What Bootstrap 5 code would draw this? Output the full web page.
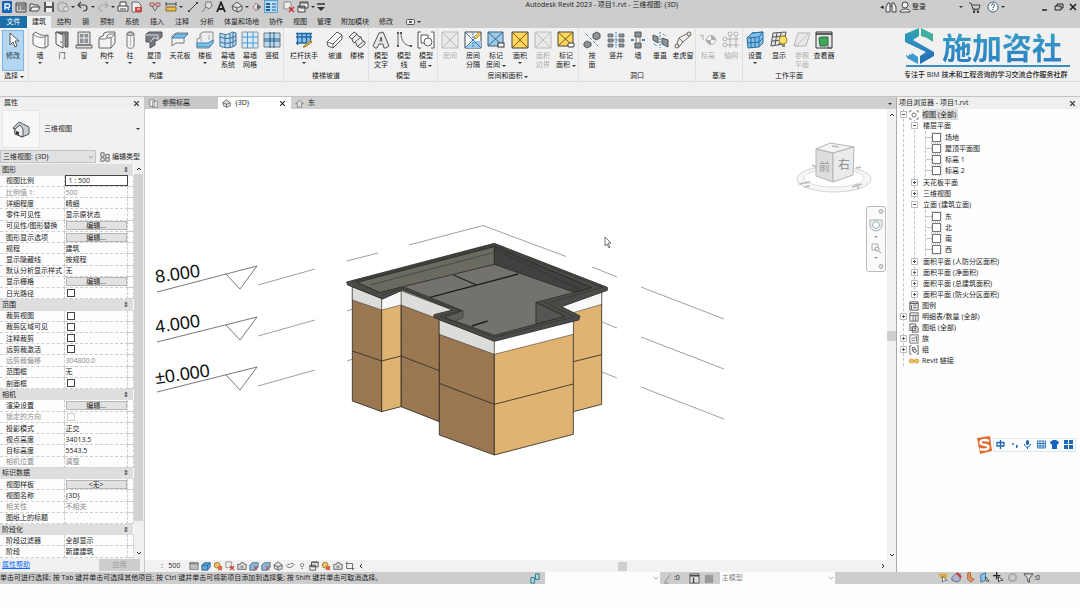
<!DOCTYPE html>
<html lang="zh-CN">
<head>
<meta charset="utf-8">
<meta name="viewport" content="width=device-width, initial-scale=1">
<title>Autodesk Revit 2023 - 项目1.rvt</title>
<link href="https://cdn.jsdelivr.net/npm/bootstrap@5.3.0/dist/css/bootstrap.min.css" rel="stylesheet">
<script src="https://cdn.jsdelivr.net/npm/bootstrap@5.3.0/dist/js/bootstrap.bundle.min.js"></script>
<style>
body{font-family:"Open Sans","Noto Sans CJK SC",sans-serif;font-size:7px;line-height:10px;color:#222;background:#fefefe}
button,input,select{font:inherit;color:inherit;padding:0;margin:0;border:0;background:none;border-radius:0}
button{white-space:nowrap}
svg{display:block;flex:none}
ul{list-style:none;margin:0;padding:0}
.chrome{background:#cdcdcd}
.titlerow{height:16px;padding-bottom:2px}
.qb{width:14px;height:13px;display:flex;align-items:center;justify-content:center;flex:none}
.qb svg{width:12px;height:12px}
.qc{width:6px}
.g2{margin-left:2px}
.on{background:#b5daf3;outline:1px solid #5b9fcb;outline-offset:-1px}
.caret{width:0;height:0;border:2px solid transparent;border-top-color:#333;border-bottom:0;display:inline-block}
.tabrow{height:12px}
.rtab{padding:0 5px 0 6px;line-height:12px}
.rtab.snug{padding:0 5px}
.rtab.file{width:27px;background:#1b6fa9;color:#fff;padding:0}
.rtab.now{background:#f2f2f2;width:24px;padding:0}
.ribbon{height:54px;background:#f1f1f1;border-bottom:1px solid #dcdcdc}
.rgroup{border-left:1px solid #e0e0e0;padding-top:2px}
.rgroup.first{border:0;width:28px}
.gname{line-height:10px;text-align:center}
.tool{width:22px;height:41px;padding-top:1px;line-height:9px;display:flex;flex-direction:column;align-items:center}
.tool svg{width:18px;height:18px;margin-bottom:2px}
.tool .caret{margin-top:2px}
.tool small{font-size:7px;white-space:nowrap}
.t24{width:24px}.t26{width:26px}.t40{width:40px}
.dim{opacity:.35}
.tool.pick{background:#b3d6f2;outline:1px solid #7fb3dc;outline-offset:-1px;color:#234}
.optbar{height:15px;background:#f0f0f0;border-bottom:1px solid #c4c4c4}
.brand{width:176px;color:#2e8fc3}
.brandname{font-size:30px;line-height:36px;font-weight:700;font-family:"Noto Sans CJK SC",sans-serif;background:linear-gradient(#3aa2c4,#2a7fc4);-webkit-background-clip:text;background-clip:text;color:transparent}
.brandrule{height:2px;width:164px;background:#3d8fbf;margin-top:1px}
.tagline{color:#222;font-weight:500;font-family:"Open Sans","Noto Sans CJK SC",sans-serif;white-space:nowrap;line-height:12px;margin-top:2px}
.side{width:145px;background:#f1f1f1;border-right:1px solid #c9c9c9}
.panehead{height:12px;line-height:12px;background:#efefef}
.typebox{height:40px}
.thumb{width:38px;height:38px;background:#f8f8f8;border:1px solid #e6e6e6}
.typecombo{height:15px}
.pick3d{appearance:none;width:96px;height:13px;background-color:#e1e1e1;border:1px solid #c2c2c2;padding-left:2px}
.chev{background-image:url("data:image/svg+xml,%3Csvg xmlns='http://www.w3.org/2000/svg' viewBox='0 0 8 8'%3E%3Cpath d='M1 2.5l3 3 3-3' fill='none' stroke='%23888'/%3E%3C/svg%3E");background-repeat:no-repeat;background-size:6px 6px;background-position:right 1px center}
.props{width:133px;height:100%;border-collapse:collapse;table-layout:fixed;background:#fdfdfd}
.props td,.props th{padding:0 0 0 1px;border-bottom:1px dashed #cfcfcf;border-right:1px dashed #cfcfcf;font-weight:400;height:11px;line-height:9px;white-space:nowrap;overflow:visible}
.props th.nm{padding-left:6px}
.props th.cat{background:#dedede;border-right:0;border-bottom:1px solid #dedede;padding-left:2px}
.props .off{color:#8b8b8b}
.props .edit{display:block;width:61px;height:9px;line-height:7px;background:#e2e2e2;border:1px solid #b5b5b5;text-align:center}
.props .box{display:block;appearance:none;width:8px;height:8px;border:1px solid #444;background:#fff;margin-left:1px}
.props .off .box{border-color:#ccc}
.props .scale{display:block;width:61px;height:9px;outline:1px solid #444;outline-offset:0;padding-left:3px;background:#fff}
.vbar{width:10px;background:#f0f0f0}
.vbar .knob{flex:0 0 88%;background:#d2d2d2;width:9px}
.foot{height:14px}
.apply{width:41px;height:12px;background:#cdcdcd;color:#999}
.vtabs{height:12px;background:#d0d0d0}
.vtab{height:12px;display:flex;align-items:center;padding:0 5px 0 4px}
.vtab svg{width:9px;height:9px}
.vtab .closer svg{width:7px;height:7px}
.vtab.past{width:73px;background:#c8c8c8}
.vtab.open{width:73px;background:#fff}
.canvas{background:#fff}
.vscroll{width:9px;background:#f1f1f1}
.vscroll .knob{height:10px;background:#cfcfcf;margin-bottom:209px}
.viewctl{height:12px;background:#f2f2f2}
.viewctl svg{width:10px;height:10px}
.viewctl button{width:12px;display:flex;justify-content:center}
.hthumb{width:9px;height:9px;background:#cfcfcf}
.navbox{right:1px;top:97px;width:20px;height:66px;border:1px solid #bbb;border-radius:3px;background:#fafafa}
.browser{width:184px;background:#fefefe;border-left:1px solid #aaa}
.browser .panehead{padding-left:2px}
.tree,.tree ul{border-left:1px dashed #c4c4c4}
.tree{margin:0 0 0 6px;line-height:11px}
.tree ul{margin-left:10px}
.tree ul ul{padding:1px 0}
.row1{display:flex;align-items:center;height:11px}
.tg{width:7px;height:7px;margin-left:-4px;background:#fff;display:flex;align-items:center;justify-content:center}
.tg svg{width:7px;height:7px}
.row1 .ic{width:10px;height:10px;margin:0 3px 0 2px}
.row1 .ind{margin-left:5px}
.noexp{margin-left:3px}
.dash{width:6px;border-top:1px dashed #c4c4c4}
.leaf{width:9px;height:9px;border:1px solid #777;outline:1px dotted #ccc;margin-right:4px;background:#fff}
.chosen{background:#dcdcdc;padding-right:2px}
.ime{right:4px;top:338px;height:19px}
.imebar{height:14px;background:#fafcfe;border:1px solid #dfe6ec;width:83px}
.imebar svg{width:9px;height:9px}
.statusbar{height:12px;background:#cdcdcd;line-height:12px}
.statusbar svg{width:11px;height:11px}
.hint{width:530px;white-space:nowrap}
.stsel{appearance:none;width:115px;height:12px;background-color:#fdfdfd;color:#888;padding-left:2px}
.stic{width:14px;display:flex;justify-content:center}
</style>
</head>
<body class="vh-100 d-flex flex-column pb-4 overflow-hidden">

<svg width="0" height="0" class="position-absolute" aria-hidden="true">
<defs>
<!-- 18px ribbon glyphs -->
<symbol id="i-cursor" viewBox="0 0 18 18"><path d="M6 2v12l3-3 2 5 2-1-2-5h4z" fill="#fff" stroke="#555"/></symbol>
<symbol id="i-wall" viewBox="0 0 18 18"><path d="M2 3l3-2c3 3 7 4 12 3v11l-3 2C9 17 5 16 2 13z" fill="#fafafa" stroke="#666"/><path d="M2 3c3 3 7 4 12 3l3-2M14 6v11" fill="none" stroke="#777"/></symbol>
<symbol id="i-door" viewBox="0 0 18 18"><path d="M3 1h12v15h-3V3H3z" fill="#888" stroke="#555"/><path d="M3 1l7 3v13l-7-4z" fill="#f4f4f4" stroke="#555"/><path d="M8 10v2" stroke="#555"/></symbol>
<symbol id="i-win" viewBox="0 0 18 18"><path d="M3 1h12v13H3zM1 14h16v3H1z" fill="#ddd" stroke="#666"/><path d="M5 3h8v9H5z" fill="#8b9097"/><path d="M9 3v9M5 7h8" stroke="#eee"/></symbol>
<symbol id="i-comp" viewBox="0 0 18 18"><path d="M1 8l1-2 3-1 1-3 3-1h8v11l-4 5H1z" fill="#f4f4f4" stroke="#666"/><path d="M1 8h6l2-1V5l2-2h6M13 17V7l4-4M9 7h4" fill="none" stroke="#777"/></symbol>
<symbol id="i-col" viewBox="0 0 18 18"><path d="M6 3c0-3 7-3 7 0v12c0 3-7 3-7 0z" fill="#f4f4f4" stroke="#777"/><ellipse cx="9.500" cy="3" rx="3.500" ry="1.500" fill="#ccc" stroke="#777"/><path d="M9.500 5v10" stroke="#bbb"/></symbol>
<symbol id="i-roof" viewBox="0 0 18 18"><path d="M1 3l3-2h13v5l-4 3-3 1v4l-5 3v-6H1z" fill="#747b82" stroke="#555"/><path d="M1 4h12v5M5 11l3-3V7h5" stroke="#ddd" fill="none"/></symbol>
<symbol id="i-ceil" viewBox="0 0 18 18"><path d="M1 5l4-3h12l-4 4v6H5l-4 3z" fill="#f4f4f4" stroke="#777"/><path d="M1 7l4-4h12l-4 4z" fill="#7cc0e8" stroke="#3b86b5"/></symbol>
<symbol id="i-floor" viewBox="0 0 18 18"><path d="M4 3l3-2h10v11l-4 5H1V8l3-1z" fill="#eee" stroke="#888"/><path d="M1 12h11l5-3v3l-4 4H1z" fill="#7cc0e8" stroke="#3b86b5"/><path d="M5 4v7M13 4v5" stroke="#aaa"/></symbol>
<symbol id="i-cwsys" viewBox="0 0 18 18"><path d="M1 2c5 2 8 2 12-1l4 1v12c-5 4-12 3-16 1z" fill="#b9def4" stroke="#3d6f96"/><path d="M1 6c5 2 11 2 16-1M1 11c5 2 11 2 16-2M6 3v13M11 3v14M14 2v14" fill="none" stroke="#3d6f96"/></symbol>
<symbol id="i-cwg" viewBox="0 0 18 18"><path d="M1 1h16v16H1z" fill="#dcecf6" stroke="#8a9299"/><path d="M6.500 1v16M12 1v16M1 6h16M1 12h16" stroke="#4d9bd0" fill="none"/></symbol>
<symbol id="i-mull" viewBox="0 0 18 18"><path d="M1 2h16v14H1z" fill="#b5dcf3" stroke="#777"/><path d="M1 8h16M7 1v16M11 1v16M1 10h16" stroke="#345b78" fill="none"/></symbol>
<symbol id="i-rail" viewBox="0 0 18 18"><path d="M2 2h14v10H2z" fill="#8ec3ea"/><path d="M1 2.500h16M1 6h16M2.500 2v12M7 2v10M11.500 2v10M15.500 2v9M1 12h11" stroke="#2468a6" stroke-width="1.400"/><path d="M8 16l7-6 2 1-7 5z" fill="#f2ca4d" stroke="#967422"/></symbol>
<symbol id="i-ramp" viewBox="0 0 18 18"><path d="M1 11L11 1l5 3v4L7 17l-5-2z" fill="#fafafa" stroke="#555"/><path d="M1 11l6 2L16 4M7 13v4" fill="none" stroke="#666"/></symbol>
<symbol id="i-stair" viewBox="0 0 18 18"><path d="M1 6l5-5 3 2 1 2 3 1 1 3 3 2v2l-5 4-3-2-1-3-3-1-1-3z" fill="#eee" stroke="#555"/><path d="M4 8l5-5M7 11l6-5M10 15l6-5" stroke="#555"/></symbol>
<symbol id="i-mtext" viewBox="0 0 18 18"><path d="M1 15L7 2l4-1 6 14-3 2h-2l-1-4H7l-2 4H3zM8 10h2L9 6z" fill="#e8e8e8" stroke="#555" fill-rule="evenodd"/></symbol>
<symbol id="i-mline" viewBox="0 0 18 18"><path d="M3 2v13M6 2c0 8 4 13 11 13" fill="none" stroke="#666"/><path d="M2 1h2v2H2zM2 14h2v2H2zM5 1h2v2H5zM15 14h2v2h-2z" fill="#555"/></symbol>
<symbol id="i-mgrp" viewBox="0 0 18 18"><path d="M4 1H1v16h3M14 1h3v16h-3M4 4h7v8H4z" fill="#fff" stroke="#555"/><circle cx="11" cy="11" r="4" fill="#f4f4f4" stroke="#666"/></symbol>
<symbol id="i-room" viewBox="0 0 18 18"><path d="M1 1h16v16H1z" fill="#ddd" stroke="#555"/><path d="M1 1l16 16M17 1L1 17" stroke="#555"/></symbol>
<symbol id="i-rsep" viewBox="0 0 18 18"><path d="M1 1h16v16H1z" fill="#f4f8fb" stroke="#444"/><path d="M10 10h7v7H1z" fill="#9ccbec"/><path d="M1 17L17 1M1 1l16 16" stroke="#376f9e"/><path d="M9 2v15" stroke="#2677b8" stroke-dasharray="2 1"/><path d="M10 6l5-5 2 2-5 5z" fill="#f4cf50" stroke="#8c6d20" stroke-width=".6"/></symbol>
<symbol id="i-rtag" viewBox="0 0 18 18"><path d="M1 1h15v14H1z" fill="#9ccbec" stroke="#3f5f7a"/><path d="M1 1l15 14M16 1L1 15" stroke="#3f5f7a"/><rect x="11" y="12" width="6" height="4" fill="#fff" stroke="#333"/></symbol>
<symbol id="i-area" viewBox="0 0 18 18"><path d="M1 1h16v16H1z" fill="#ffd75c" stroke="#4b4430"/><path d="M1 1l16 16M17 1L1 17" stroke="#6b5a26"/></symbol>
<symbol id="i-atag" viewBox="0 0 18 18"><path d="M1 1h15v14H1z" fill="#ffd75c" stroke="#4b4430"/><path d="M1 1l15 14M16 1L1 15" stroke="#6b5a26"/><rect x="11" y="12" width="6" height="4" rx="1" fill="#fff" stroke="#333"/></symbol>
<symbol id="i-face" viewBox="0 0 18 18"><path d="M3 3l12 12" stroke="#3b86b5" stroke-dasharray="3 2"/><path d="M10 3l4-2 3 2v4l-4 2-3-2zM1 12l3-2 4 2v3l-4 2-3-2z" fill="#8c949b" stroke="#555"/></symbol>
<symbol id="i-shaft" viewBox="0 0 18 18"><path d="M1 3h5v3H1zM12 3h5v3h-5zM1 8h5v3H1zM12 8h5v3h-5zM1 13h5v3H1zM12 13h5v3h-5z" fill="#8c949b" stroke="#555" stroke-width=".7"/><path d="M9 1v16M6 9h6" stroke="#3b86c5" stroke-dasharray="2 1"/></symbol>
<symbol id="i-wopen" viewBox="0 0 18 18"><path d="M6 1h6v5H6zM6 12h6v5H6z" fill="#8c949b" stroke="#555"/><path d="M2 9h3M13 9h3" stroke="#3b86c5" stroke-width="2"/><path d="M7 7v4M11 7v4" stroke="#777"/></symbol>
<symbol id="i-vert" viewBox="0 0 18 18"><path d="M2 4l5 2v6l-5-3zM11 7l6 2v7l-6-3z" fill="#8c949b" stroke="#555"/><path d="M9 1v16M3 13l3 2M12 3l3 2" stroke="#3b86c5" stroke-dasharray="2 1"/></symbol>
<symbol id="i-dorm" viewBox="0 0 18 18"><path d="M2 16l3-9 9-5 2 3-7 6-4 5zM5 7l4 4" fill="#eee" stroke="#75685c"/><circle cx="15" cy="3" r="2" fill="#ddd" stroke="#75685c"/><circle cx="3" cy="15" r="2" fill="#ddd" stroke="#75685c"/></symbol>
<symbol id="i-level" viewBox="0 0 18 18"><path d="M1 5l3-1v5M6 9h5" stroke="#333" fill="none"/><circle cx="12" cy="9" r="4.500" fill="#fff" stroke="#333"/><path d="M12 9V4.500A4.500 4.500 0 0116.500 9zM12 9v4.500A4.500 4.500 0 017.500 9z" fill="#333"/></symbol>
<symbol id="i-grid" viewBox="0 0 18 18"><path d="M8 5v12M14 5v12M5 8h12M5 14h12" stroke="#333"/><g fill="#fff" stroke="#333"><circle cx="8" cy="3" r="2"/><circle cx="14" cy="3" r="2"/><circle cx="3" cy="8" r="2"/><circle cx="3" cy="14" r="2"/></g></symbol>
<symbol id="i-wpset" viewBox="0 0 18 18"><path d="M1 7l5-5 11-1v11l-4 4-11 1z" fill="#7fbfea" stroke="#2f6e9f"/><path d="M1 7l12-1 4-5M13 6v10M1 12l12-1 4-4M5 6v11M9 6v10M6 2l11-1" fill="none" stroke="#2f6e9f"/></symbol>
<symbol id="i-wpshow" viewBox="0 0 18 18"><path d="M3 2l13-1-2 12-13 2z" fill="#e4e6e8" stroke="#555"/><path d="M7 2L5 14M11 2L9 14M2 6l13-1M2 10l12-1" stroke="#555"/><circle cx="13" cy="9" r="4" fill="#ffe169" stroke="#a88824"/><path d="M12 13h3v3h-3z" fill="#888"/></symbol>
<symbol id="i-refpl" viewBox="0 0 18 18"><path d="M5 2h12l-4 13H1z" fill="#ddd" stroke="#444"/><path d="M3 15L15 3" stroke="#333" stroke-dasharray="2 1"/></symbol>
<symbol id="i-viewer" viewBox="0 0 18 18"><path d="M1 1h16v16H1z" fill="#e8e8e8" stroke="#333"/><path d="M1 3h16" stroke="#333" stroke-width="1.500"/><path d="M4 7l2-1h7v7l-2 2H5z" fill="#46a35a" stroke="#23723a"/><path d="M13 13v4h4" fill="none" stroke="#555"/></symbol>
<!-- 12px glyphs -->
<symbol id="q-r" viewBox="0 0 12 12"><rect x="1" width="10" height="12" rx="1" fill="#1763b6"/><path d="M4 9V3h3a1.500 1.500 0 010 3.500H4M6.500 6.500L8 9" stroke="#fff" stroke-width="1.300" fill="none"/></symbol>
<symbol id="q-home" viewBox="0 0 12 12"><path d="M1 2h10v9H1zM1 4h10M3 6h2M3 8h2M6 6h4M6 8h4" fill="none" stroke="#444"/></symbol>
<symbol id="q-open" viewBox="0 0 12 12"><path d="M1 10V3h3l1 1h4v2M1 10l2-4h8l-2 4z" fill="#eee" stroke="#444"/></symbol>
<symbol id="q-save" viewBox="0 0 12 12"><path d="M1 1h9l1 1v9H1z" fill="#555"/><path d="M3 1h6v4H3zM3 7h6v4H3z" fill="#eee"/></symbol>
<symbol id="q-sync" viewBox="0 0 12 12"><path d="M1 3l4-2 5 2v6l-4 2-5-2z" fill="#ccc" stroke="#999"/><circle cx="9" cy="8" r="2.500" fill="#ddd" stroke="#999"/></symbol>
<symbol id="q-undo" viewBox="0 0 12 12"><path d="M4 1L1 4l3 3M1 4h6a3 3 0 010 6H6" fill="none" stroke="#444" stroke-width="1.200"/></symbol>
<symbol id="q-redo" viewBox="0 0 12 12"><path d="M8 1l3 3-3 3M11 4H5a3 3 0 000 6h1" fill="none" stroke="#aaa" stroke-width="1.200"/></symbol>
<symbol id="q-print" viewBox="0 0 12 12"><path d="M3 5V1h6v4M1 5h10v5H1zM3 8h6" fill="#f4f4f4" stroke="#444"/></symbol>
<symbol id="q-pdf" viewBox="0 0 12 12"><path d="M1 1h6l3 3v7H1z" fill="#eee" stroke="#666"/><path d="M4 6h7v5H4z" fill="#cc4a3d"/><path d="M6 8h3" stroke="#fff"/></symbol>
<symbol id="q-dim" viewBox="0 0 12 12"><path d="M1 2h4v3H1zM7 2h4v3H7z" fill="none" stroke="#a55"/><path d="M3 5l3 5 3-5" stroke="#666" fill="none"/></symbol>
<symbol id="q-meas" viewBox="0 0 12 12"><path d="M1 6h10v4H1z" fill="#e9bd4f" stroke="#8a6a22"/><path d="M1 3h10M1 1v4M11 1v4" stroke="#444"/></symbol>
<symbol id="q-line" viewBox="0 0 12 12"><path d="M2 10l8-8" stroke="#444"/><path d="M1 9h2v2H1zM9 1h2v2H9z" fill="#444"/></symbol>
<symbol id="q-tag" viewBox="0 0 12 12"><path d="M1 11l4-5M5 1h5l1 4-3 3-4-3z" fill="#ddd" stroke="#777"/></symbol>
<symbol id="q-a" viewBox="0 0 12 12"><path d="M2 11L6 1.500 10 11M3.500 8h5" fill="none" stroke="#222" stroke-width="1.800"/></symbol>
<symbol id="q-3d" viewBox="0 0 12 12"><path d="M1 5l5-4 5 4v4l-4 2-5-2z" fill="#ddd" stroke="#555"/><path d="M1 5l5 2 5-2M6 7v4" stroke="#555" fill="none"/></symbol>
<symbol id="q-sec" viewBox="0 0 12 12"><path d="M5 2l5 4-5 4-3-4z" fill="#ddd" stroke="#a77"/><path d="M6 3l4 3-4 3z" fill="#666"/></symbol>
<symbol id="q-thin" viewBox="0 0 12 12"><path d="M1 3h4M1 6h4M1 9h4" stroke="#1d5f96" stroke-width="2"/><path d="M7 3h4M7 6h4M7 9h4" stroke="#1d5f96"/></symbol>
<symbol id="q-close" viewBox="0 0 12 12"><path d="M1 1h7v7H1z" fill="#eee" stroke="#888"/><path d="M6 6l5 5M11 6l-5 5" stroke="#c33" stroke-width="1.400"/></symbol>
<symbol id="q-sw" viewBox="0 0 12 12"><path d="M3 1h8v6H3zM1 5h7v6H1z" fill="#eee" stroke="#444"/><path d="M1 6h7M3 2h8" stroke="#444"/></symbol>
<symbol id="q-bin" viewBox="0 0 12 12"><path d="M1 11V6l2-4h2v9zM7 11V2h2l2 4v5zM5 5h2" fill="#eee" stroke="#444"/></symbol>
<symbol id="q-user" viewBox="0 0 12 12"><circle cx="6" cy="4" r="3" fill="#f4f4f4" stroke="#444"/><path d="M1 11c0-4 10-4 10 0z" fill="#f4f4f4" stroke="#444"/></symbol>
<symbol id="q-cart" viewBox="0 0 12 12"><path d="M0 2h2l2 6h6l1-4H3M4 8v1h6" fill="none" stroke="#444"/><circle cx="5" cy="11" r="1"/><circle cx="9" cy="11" r="1"/></symbol>
<symbol id="q-x" viewBox="0 0 12 12"><path d="M2 2l8 8M10 2l-8 8" stroke="#222" stroke-width="1.800"/></symbol>
<symbol id="q-plus" viewBox="0 0 7 7"><path d="M.5.5h6v6h-6z" fill="#fff" stroke="#bbb"/><path d="M2 3.500h3M3.500 2v3" stroke="#555"/></symbol>
<symbol id="q-minus" viewBox="0 0 7 7"><path d="M.5.5h6v6h-6z" fill="#fff" stroke="#bbb"/><path d="M2 3.500h3" stroke="#555"/></symbol>
<symbol id="q-sheet" viewBox="0 0 12 12"><path d="M1 1h10v10H1zM1 4h10M5 4v7M8 4v7" fill="#f4f4f4" stroke="#555"/></symbol>
<symbol id="q-detail" viewBox="0 0 12 12"><path d="M1 2h10v8H1z" fill="#cfd3d1" stroke="#666"/><path d="M1 3.500h10" stroke="#555"/><path d="M2 6h8M2 8h8" stroke="#aaa"/></symbol>
<symbol id="q-cube" viewBox="0 0 12 12"><path d="M1 5l3-3h7v5l-3 4H1z" fill="#5fa4d6" stroke="#2c6596"/><path d="M1 5h7l3-3M8 5v6" fill="none" stroke="#2c6596"/></symbol>
<symbol id="q-cropr" viewBox="0 0 12 12"><path d="M1 5l3-3h7v5l-3 4H1z" fill="#8fb5d6" stroke="#4a6a86"/><path d="M6 6l4 5M10 6l-4 5" stroke="#b54a3c" stroke-width="1.200"/></symbol>
<symbol id="q-crop" viewBox="0 0 12 12"><path d="M2 1v8h9M1 3h8v8" fill="none" stroke="#555"/></symbol>
<symbol id="q-cam" viewBox="0 0 12 12"><path d="M1 4h3l1-2h3l1 2h2v6H1z" fill="#ddd" stroke="#555"/><circle cx="6" cy="7" r="2" fill="#999"/></symbol>
<symbol id="q-sun" viewBox="0 0 12 12"><circle cx="5" cy="5" r="3.500" fill="#efbf63" stroke="#9a7430"/><path d="M6 6h5v5H6z" fill="#d9694a"/></symbol>
</defs>
</svg>

<header>
<div class="chrome">
 <div class="titlerow d-flex">
  <div class="d-flex">
   <button class="qb" aria-label="Revit"><svg><use href="#q-r"/></svg></button>
   <button class="qb" aria-label="主页"><svg><use href="#q-home"/></svg></button>
   <button class="qb" aria-label="打开"><svg><use href="#q-open"/></svg></button>
   <button class="qb" aria-label="保存"><svg><use href="#q-save"/></svg></button>
   <button class="qb" aria-label="同步"><svg><use href="#q-sync"/></svg></button>
   <button class="qb qc" aria-label="同步选项"><i class="caret"></i></button>
   <button class="qb" aria-label="放弃"><svg><use href="#q-undo"/></svg></button>
   <button class="qb qc" aria-label="放弃列表"><i class="caret"></i></button>
   <button class="qb" aria-label="重做"><svg><use href="#q-redo"/></svg></button>
   <button class="qb qc" aria-label="重做列表"><i class="caret"></i></button>
   <button class="qb" aria-label="打印"><svg><use href="#q-print"/></svg></button>
   <button class="qb" aria-label="导出 PDF"><svg><use href="#q-pdf"/></svg></button>
   <button class="qb ms-1" aria-label="测量"><svg><use href="#q-dim"/></svg></button>
   <button class="qb g2" aria-label="标注"><svg><use href="#q-meas"/></svg></button>
   <button class="qb qc" aria-label="标注选项"><i class="caret"></i></button>
   <button class="qb g2" aria-label="对齐尺寸"><svg><use href="#q-line"/></svg></button>
   <button class="qb" aria-label="按类别标记"><svg><use href="#q-tag"/></svg></button>
   <button class="qb" aria-label="文字"><svg><use href="#q-a"/></svg></button>
   <button class="qb g2" aria-label="默认三维视图"><svg><use href="#q-3d"/></svg></button>
   <button class="qb qc" aria-label="三维选项"><i class="caret"></i></button>
   <button class="qb" aria-label="剖面"><svg><use href="#q-sec"/></svg></button>
   <button class="qb on" aria-label="细线"><svg><use href="#q-thin"/></svg></button>
   <button class="qb ms-1" aria-label="关闭非活动视图"><svg><use href="#q-close"/></svg></button>
   <button class="qb" aria-label="切换窗口"><svg><use href="#q-sw"/></svg></button>
   <button class="qb qc" aria-label="窗口列表"><i class="caret"></i></button>
   <button class="qb qc g2" aria-label="自定义"><svg viewBox="0 0 12 12"><path d="M2 3h8" stroke="#333" stroke-width="1.500"/><path d="M2 6h8L6 10z" fill="#333"/></svg></button>
  </div>
  <div class="flex-grow-1 text-center text-nowrap">Autodesk Revit 2023 - 项目1.rvt - 三维视图: {3D}</div>
  <div class="d-flex align-items-center">
   <span>◂</span>
   <button class="qb" aria-label="搜索"><svg><use href="#q-bin"/></svg></button>
   <button class="qb" aria-label="用户"><svg><use href="#q-user"/></svg></button>
   <button class="me-4">登录</button>
   <button class="qb qc ms-2" aria-label="帐户"><i class="caret"></i></button>
   <button class="qb ms-1" aria-label="应用商店"><svg><use href="#q-cart"/></svg></button>
   <button class="qb ms-1" aria-label="帮助"><svg viewBox="0 0 12 12"><circle cx="6" cy="6" r="5" fill="#fff" stroke="#3c5f86"/><path d="M4.500 4.500c0-2 3-2 3 0 0 1-1.500 1-1.500 2.500M6 8v1.200" fill="none" stroke="#234"/></svg></button>
   <button class="qb qc me-4" aria-label="帮助选项"><i class="caret"></i></button>
   <button class="qb ms-2" aria-label="最小化"><svg viewBox="0 0 12 12"><path d="M3 9h5" stroke="#222" stroke-width="1.500"/></svg></button>
   <button class="qb" aria-label="还原"><svg viewBox="0 0 12 12"><path d="M4 5V3h6v4H8M2 5h6v4H2z" fill="none" stroke="#222"/></svg></button>
   <button class="qb" aria-label="关闭"><svg viewBox="0 0 12 12"><path d="M3 3l6 6M9 3l-6 6" stroke="#222" stroke-width="1.600"/></svg></button>
  </div>
 </div>
 <nav class="tabrow d-flex" aria-label="功能区选项卡">
  <button class="rtab file">文件</button><button class="rtab now">建筑</button><button class="rtab">结构</button><button class="rtab">钢</button><button class="rtab">预制</button><button class="rtab">系统</button><button class="rtab">插入</button><button class="rtab">注释</button><button class="rtab">分析</button><button class="rtab snug">体量和场地</button><button class="rtab snug">协作</button><button class="rtab snug">视图</button><button class="rtab snug">管理</button><button class="rtab snug">附加模块</button><button class="rtab snug">修改</button>
  <button class="d-flex align-items-center ms-2" aria-label="最小化功能区"><svg width="9" height="7" viewBox="0 0 9 7"><rect x=".5" y=".5" width="8" height="5" rx="1" fill="#eee" stroke="#555"/><path d="M3 3h3" stroke="#333" stroke-width="1.500"/></svg><i class="caret g2"></i></button>
 </nav>
</div>

<div class="ribbon d-flex">
 <section class="rgroup first"><div class="d-flex"><button class="tool pick g2"><svg><use href="#i-cursor"/></svg>修改</button></div><div class="gname">选择 <i class="caret"></i></div></section>
 <section class="rgroup"><div class="d-flex">
  <button class="tool"><svg><use href="#i-wall"/></svg>墙<i class="caret"></i></button>
  <button class="tool"><svg><use href="#i-door"/></svg>门</button>
  <button class="tool"><svg><use href="#i-win"/></svg>窗</button>
  <button class="tool t24"><svg><use href="#i-comp"/></svg>构件<i class="caret"></i></button>
  <button class="tool"><svg><use href="#i-col"/></svg>柱<i class="caret"></i></button>
  <button class="tool t26"><svg><use href="#i-roof"/></svg>屋顶<i class="caret"></i></button>
  <button class="tool t26"><svg><use href="#i-ceil"/></svg>天花板</button>
  <button class="tool t24"><svg><use href="#i-floor"/></svg>楼板<i class="caret"></i></button>
  <button class="tool"><svg><use href="#i-cwsys"/></svg>幕墙<br>系统</button>
  <button class="tool"><svg><use href="#i-cwg"/></svg>幕墙<br>网格</button>
  <button class="tool"><svg><use href="#i-mull"/></svg>竖梃</button>
 </div><div class="gname">构建</div></section>
 <section class="rgroup"><div class="d-flex">
  <button class="tool t40"><svg><use href="#i-rail"/></svg>栏杆扶手<i class="caret"></i></button>
  <button class="tool"><svg><use href="#i-ramp"/></svg>坡道</button>
  <button class="tool"><svg><use href="#i-stair"/></svg>楼梯</button>
 </div><div class="gname">楼梯坡道</div></section>
 <section class="rgroup"><div class="d-flex">
  <button class="tool t24"><svg><use href="#i-mtext"/></svg>模型<br>文字</button>
  <button class="tool"><svg><use href="#i-mline"/></svg>模型<br>线</button>
  <button class="tool"><svg><use href="#i-mgrp"/></svg>模型<small>组 <i class="caret"></i></small></button>
 </div><div class="gname">模型</div></section>
 <section class="rgroup"><div class="d-flex">
  <button class="tool t24 dim" disabled><svg><use href="#i-room"/></svg>房间</button>
  <button class="tool"><svg><use href="#i-rsep"/></svg>房间<br>分隔</button>
  <button class="tool t24"><svg><use href="#i-rtag"/></svg>标记<small>房间 <i class="caret"></i></small></button>
  <button class="tool t24"><svg><use href="#i-area"/></svg>面积<i class="caret"></i></button>
  <button class="tool dim" disabled><svg><use href="#i-room"/></svg>面积<br>边界</button>
  <button class="tool t24"><svg><use href="#i-atag"/></svg>标记<small>面积 <i class="caret"></i></small></button>
 </div><div class="gname">房间和面积 <i class="caret"></i></div></section>
 <section class="rgroup"><div class="d-flex">
  <button class="tool t26"><svg><use href="#i-face"/></svg>按<br>面</button>
  <button class="tool"><svg><use href="#i-shaft"/></svg>竖井</button>
  <button class="tool"><svg><use href="#i-wopen"/></svg>墙</button>
  <button class="tool"><svg><use href="#i-vert"/></svg>垂直</button>
  <button class="tool t24"><svg><use href="#i-dorm"/></svg>老虎窗</button>
 </div><div class="gname">洞口</div></section>
 <section class="rgroup"><div class="d-flex">
  <button class="tool t24 dim" disabled><svg><use href="#i-level"/></svg>标高</button>
  <button class="tool dim" disabled><svg><use href="#i-grid"/></svg>轴网</button>
 </div><div class="gname">基准</div></section>
 <section class="rgroup"><div class="d-flex">
  <button class="tool t24"><svg><use href="#i-wpset"/></svg>设置<i class="caret"></i></button>
  <button class="tool t24"><svg><use href="#i-wpshow"/></svg>显示</button>
  <button class="tool dim" disabled><svg><use href="#i-refpl"/></svg>参照<br>平面</button>
  <button class="tool"><svg><use href="#i-viewer"/></svg>查看器</button>
 </div><div class="gname">工作平面</div></section>
 <div class="brand ms-auto">
  <div class="d-flex align-items-center">
   <svg width="30" height="36" viewBox="0 0 30 36" class="me-2" aria-label="logo">
    <defs><linearGradient id="lg" x1="0" y1="0" x2="0" y2="1"><stop offset="0" stop-color="#32a59f"/><stop offset=".35" stop-color="#2e93c4"/><stop offset="1" stop-color="#2569b1"/></linearGradient></defs>
    <path d="M15 0v8l-6 4 21 12v4L16 36v-8l6-4L1 14V6z" fill="url(#lg)"/><path d="M17 0l12 6v8l-6-4-6-2z" fill="#40b09e"/><path d="M14 36L3 30l-1-3 3 1v-2l2 1 1-2 6 4z" fill="#3b9bd2"/></svg>
   <span class="brandname">施加咨社</span>
  </div>
  <div class="brandrule g2"></div>
  <div class="tagline">专注于 BIM 技术和工程咨询的学习交流合作服务社群</div>
 </div>
</div>
<div class="optbar"></div>
</header>

<main class="d-flex flex-grow-1 overflow-hidden">
 <aside class="side d-flex flex-column flex-shrink-0">
  <div class="panehead d-flex justify-content-between align-items-center px-1"><span>属性</span><button aria-label="关闭属性"><svg width="7" height="7"><use href="#q-x"/></svg></button></div>
  <div class="typebox d-flex align-items-center pe-1">
   <div class="thumb d-flex align-items-center justify-content-center flex-shrink-0 g2 me-1"><svg width="18" height="18" viewBox="0 0 18 18"><path d="M1 8l6-6 10 5v7l-7 3-7-3V9z" fill="#c8ced3" stroke="#555"/><path d="M1 8l2 1 5-4 3 4v8l-8-3V9" fill="#eef0f2" stroke="#555"/><path d="M4 11v3l3 1v-3z" fill="#333"/></svg></div>
   <span class="flex-grow-1">三维视图</span><i class="caret"></i>
  </div>
  <div class="typecombo d-flex align-items-center">
   <select class="pick3d chev" aria-label="视图实例"><option>三维视图: {3D}</option></select>
   <button class="d-flex align-items-center ms-1"><svg width="10" height="10" viewBox="0 0 12 12"><path d="M1 1h4v4H1zM7 3h4v8H7zM1 7h4v4H1zM7 7h4" fill="#eee" stroke="#555"/></svg><span class="g2">编辑类型</span></button>
  </div>
  <div class="d-flex flex-grow-1 overflow-hidden">
   <table class="props">
    <colgroup><col width="64"><col width="63"><col width="6"></colgroup>
    <tbody>
    <tr><th class="cat" colspan="3">图形<span class="float-end g2 me-1">⇕</span></th></tr>
    <tr><th class="nm"><label for="sc">视图比例</label></th><td><input id="sc" class="scale" value="1 : 500"></td><td></td></tr>
    <tr class="off"><th class="nm">比例值 1:</th><td>500</td><td></td></tr>
    <tr><th class="nm">详细程度</th><td>精细</td><td></td></tr>
    <tr><th class="nm">零件可见性</th><td>显示原状态</td><td></td></tr>
    <tr><th class="nm">可见性/图形替换</th><td><button class="edit">编辑...</button></td><td></td></tr>
    <tr><th class="nm">图形显示选项</th><td><button class="edit">编辑...</button></td><td></td></tr>
    <tr><th class="nm">规程</th><td>建筑</td><td></td></tr>
    <tr><th class="nm">显示隐藏线</th><td>按规程</td><td></td></tr>
    <tr><th class="nm">默认分析显示样式</th><td>无</td><td></td></tr>
    <tr><th class="nm">显示栅格</th><td><button class="edit">编辑...</button></td><td></td></tr>
    <tr><th class="nm"><label for="c1">日光路径</label></th><td><input id="c1" class="box" type="checkbox"></td><td></td></tr>
    <tr><th class="cat" colspan="3">范围<span class="float-end me-1">⇕</span></th></tr>
    <tr><th class="nm"><label for="c2">裁剪视图</label></th><td><input id="c2" class="box" type="checkbox"></td><td></td></tr>
    <tr><th class="nm"><label for="c3">裁剪区域可见</label></th><td><input id="c3" class="box" type="checkbox"></td><td></td></tr>
    <tr><th class="nm"><label for="c4">注释裁剪</label></th><td><input id="c4" class="box" type="checkbox"></td><td></td></tr>
    <tr><th class="nm"><label for="c5">远剪裁激活</label></th><td><input id="c5" class="box" type="checkbox"></td><td></td></tr>
    <tr class="off"><th class="nm">远剪裁偏移</th><td>304800.0</td><td></td></tr>
    <tr><th class="nm">范围框</th><td>无</td><td></td></tr>
    <tr><th class="nm"><label for="c6">剖面框</label></th><td><input id="c6" class="box" type="checkbox"></td><td></td></tr>
    <tr><th class="cat" colspan="3">相机<span class="float-end me-1">⇕</span></th></tr>
    <tr><th class="nm">渲染设置</th><td><button class="edit">编辑...</button></td><td></td></tr>
    <tr class="off"><th class="nm"><label for="c7">锁定的方向</label></th><td><input id="c7" class="box" type="checkbox" disabled></td><td></td></tr>
    <tr><th class="nm">投影模式</th><td>正交</td><td></td></tr>
    <tr><th class="nm">视点高度</th><td>34013.5</td><td></td></tr>
    <tr><th class="nm">目标高度</th><td>5543.5</td><td></td></tr>
    <tr class="off"><th class="nm">相机位置</th><td>调整</td><td></td></tr>
    <tr><th class="cat" colspan="3">标识数据<span class="float-end me-1">⇕</span></th></tr>
    <tr><th class="nm">视图样板</th><td><button class="edit">&lt;无&gt;</button></td><td></td></tr>
    <tr><th class="nm">视图名称</th><td>{3D}</td><td></td></tr>
    <tr class="off"><th class="nm">相关性</th><td>不相关</td><td></td></tr>
    <tr><th class="nm">图纸上的标题</th><td></td><td></td></tr>
    <tr><th class="cat" colspan="3">阶段化<span class="float-end me-1">⇕</span></th></tr>
    <tr><th class="nm">阶段过滤器</th><td>全部显示</td><td></td></tr>
    <tr><th class="nm">阶段</th><td>新建建筑</td><td></td></tr>
    </tbody>
   </table>
   <div class="vbar d-flex flex-column align-items-center justify-content-between"><svg width="8" height="10" viewBox="0 0 8 10"><path d="M2 6l2-2 2 2" fill="none" stroke="#333"/></svg><div class="knob"></div><div class="flex-grow-1"></div><svg width="8" height="10" viewBox="0 0 8 10"><path d="M2 4l2 2 2-2" fill="none" stroke="#333"/></svg></div>
  </div>
  <div class="foot d-flex justify-content-between align-items-center g2 pe-1"><a href="#">属性帮助</a><button class="apply" disabled>应用</button></div>
 </aside>

 <section class="d-flex flex-column flex-grow-1 overflow-hidden">
  <div class="vtabs d-flex">
   <button class="vtab past"><svg class="me-1" viewBox="0 0 12 12"><path d="M1 1h6v9H1zM5 3h6v8H5z" fill="#eee" stroke="#777"/></svg>参照标高</button>
   <div class="vtab open"><svg class="me-1"><use href="#q-3d"/></svg><span class="flex-grow-1">{3D}</span><button class="closer" aria-label="关闭视图"><svg><use href="#q-x"/></svg></button></div>
   <button class="vtab"><svg class="me-1" viewBox="0 0 12 12"><path d="M1 6l5-4 5 4H9v5H3V6z" fill="#ddd" stroke="#777"/></svg>东</button>
   <button class="ms-auto me-1" aria-label="视图列表"><i class="caret"></i></button>
  </div>
  <div class="d-flex flex-grow-1 overflow-hidden">
   <div class="canvas position-relative flex-grow-1 overflow-hidden">
    <svg class="w-100 h-100" viewBox="145 109 742 451" preserveAspectRatio="xMinYMin meet" role="img" aria-label="三维模型">
     <defs>
      <pattern id="lt" width="9" height="9" patternUnits="userSpaceOnUse"><rect width="9" height="9" fill="#e0b472"/><path d="M1 1h2M5 3h1M2 6h1M7 7h2M6 0v1" stroke="#cb9a57"/><path d="M3 4h1M7 5h1M0 8h2" stroke="#ecc68b"/></pattern>
      <pattern id="dk" width="9" height="9" patternUnits="userSpaceOnUse"><rect width="9" height="9" fill="#9a7852"/><path d="M1 1h2M5 3h1M2 6h1M7 7h2M6 0v1" stroke="#8b6844"/><path d="M3 4h1M7 5h1M0 8h2" stroke="#a8845b"/></pattern>
     </defs>
     <g fill="none" stroke="#a0a0a0">
      <path d="M347 261l31-8M409 245l74-19.500 83 31M592 267l25 10M347 311l6-2M347 361l6-2M602 322l15 6M602 372l15 6M641 287l83 32M641 337l83 32M641 387l83 32"/>
      <path d="M258 285l57-16M258 336l57-16M258 386l57-16"/>
     </g>
     <g fill="none" stroke="#555" stroke-width=".8">
      <path d="M157 292l100-26-17 23-14-15M157 342l100-25-17 23-14-15M157 392l100-25-17 23-14-15"/>
     </g>
     <g fill="#111" font-family="'Liberation Sans',sans-serif" font-size="18">
      <text transform="translate(156 283) rotate(-8)">8.000</text>
      <text transform="translate(156 333) rotate(-8)">4.000</text>
      <text transform="translate(156 384) rotate(-8)">±0.000</text>
     </g>
     <g transform="translate(330 220) scale(.33333)" stroke="#2e2a24" stroke-width="2.500" stroke-linejoin="round">
      <path d="M67 200l88 35v340l-88-32zM213 212l115 45v348l-115-45z" fill="url(#dk)"/>
      <path d="M155 235l58-23v348l-58 15z" fill="url(#lt)"/>
      <path d="M690 250l125-40v343l-85 22-40 0z" fill="url(#lt)" stroke="none"/><path d="M815 210v343l-85 22" fill="none"/>
      <path d="M67 200l88 35v35l-88-30zM213 212l160 60-45 26-115-43z" fill="#dcdcda" stroke-width="1.500"/>
      <path d="M155 235l58-23v43l-58 15zM680 258l135-48v43l-85 25z" fill="#f8f8f8" stroke-width="1.500"/>
      <path d="M328 300l165 62v343l-165-60z" fill="url(#dk)"/>
      <path d="M493 362l237-64v345l-237 62z" fill="url(#lt)"/>
      <path d="M328 300l165 62v41l-165-60z" fill="#dcdcda" stroke-width="1.500"/>
      <path d="M493 362l237-64v45l-237 60z" fill="#fff" stroke-width="1.500"/>
      <path d="M67 393l88 30 58-15 115 44M328 490l165 63 237-61M730 425l85-21" fill="none"/>
      <path d="M50 186L493 70l339 132v9l-137 49 55 28-4 12-253 64-181-72v-8l56-14-150-60-60 27-105-42z" fill="#4b4b49"/>
      <path d="M82 187L493 80l292 123-167 44 87 42-212 57-148-54 54-20-184-74-66 20z" fill="#73726f" stroke-width="2"/>
      <path d="M82 187L493 80v53L170 212l-20 6z" fill="#6b6a61"/>
      <path d="M493 80l292 123-52 14-240-84z" fill="#3f4240"/>
      <path d="M618 247l87 42-87 23z" fill="#555653"/>
      <path d="M345 292l54-20v22l-25 10z" fill="#5e5e5a" stroke-width="1.500"/>
      <path d="M300 232l265-70M370 165l70 30M425 318l48-15" fill="none" stroke="#1f1f1e" stroke-width="4"/>
      <path d="M66 186L493 75l324 127-160 46M120 195l370-97M155 226l60-21 175 67-60 17 163 63 240-62-90-43M493 88l255 120" fill="none" stroke="#272726" stroke-width="1.500"/>
     </g>
     <g stroke="#b5b5b5">
      <ellipse cx="834" cy="179" rx="37" ry="13" fill="#f6f6f6" stroke="#d2d2d2"/><ellipse cx="834" cy="178" rx="30" ry="9" fill="#fff" stroke="#dedede"/>
      <path d="M816 149l14-6 24 4-21 6z" fill="#f4f4f4"/><path d="M816 149l17 4v29l-17-6z" fill="#dedede"/><path d="M833 153l21-6-1 28-20 7z" fill="#ebebeb"/>
      <path d="M799 184l11-2M804 187l6-1M852 187l10-3M856 184l3 5M812 165l4 2M856 168l5-1M832 146l7 1" stroke="#bbb" stroke-width="1.500"/>
     </g>
     <text x="819" y="171" font-size="11" fill="#9c9c9c">前</text><text x="838" y="169" font-size="12" fill="#8c8c8c">右</text>
     <path d="M605 237v9l2-2 2 4 1-1-2-4h3z" fill="#fff" stroke="#555" stroke-width=".8"/>
    </svg>
    <div class="navbox position-absolute d-flex flex-column align-items-center justify-content-around">
     <svg width="18" height="5" viewBox="0 0 18 5"><circle cx="14" cy="2.500" r="2" fill="#ddd" stroke="#aaa"/></svg>
     <button aria-label="控制盘"><svg width="14" height="14" viewBox="0 0 14 14"><path d="M1 2h12v5a6 6 0 01-12 0z" fill="#f1f3f3" stroke="#9bb0b0"/><circle cx="7" cy="7" r="3.500" fill="#fff" stroke="#9bb0b0"/></svg></button>
     <svg width="4" height="3"><path d="M0 0h4L2 2z" fill="#999"/></svg>
     <button aria-label="缩放"><svg width="10" height="10" viewBox="0 0 10 10"><path d="M1 1h6v6H1z" fill="#fff" stroke="#aaa"/><circle cx="6" cy="6" r="2" fill="#fff" stroke="#999"/><path d="M8 8l2 2" stroke="#888"/></svg></button>
     <svg width="4" height="3"><path d="M0 0h4L2 2z" fill="#999"/></svg>
     <svg width="18" height="5" viewBox="0 0 18 5"><circle cx="14" cy="2.500" r="2" fill="#ddd" stroke="#aaa"/></svg>
    </div>
   </div>
   <div class="vscroll d-flex flex-column justify-content-between align-items-center">
    <svg width="8" height="10" viewBox="0 0 8 10"><path d="M2 7l2-2 2 2" fill="none" stroke="#333"/></svg>
    <div class="knob w-100 mt-auto"></div>
    <svg width="8" height="10" viewBox="0 0 8 10"><path d="M2 4l2 2 2-2" fill="none" stroke="#333"/></svg>
   </div>
  </div>
  <div class="viewctl d-flex align-items-center">
   <span class="ps-3 pe-2 text-nowrap">: &nbsp; 500</span>
   <button aria-label="详细程度"><svg><use href="#q-detail"/></svg></button>
   <button aria-label="视觉样式"><svg><use href="#q-cube"/></svg></button>
   <button aria-label="日光路径"><svg><use href="#q-sun"/></svg></button>
   <button aria-label="阴影"><svg><use href="#q-close"/></svg></button>
   <button aria-label="渲染"><svg><use href="#q-cam"/></svg></button>
   <button aria-label="裁剪视图"><svg><use href="#q-cropr"/></svg></button>
   <button aria-label="显示裁剪"><svg><use href="#q-cropr"/></svg></button>
   <button aria-label="锁定视图"><svg><use href="#q-3d"/></svg></button>
   <button aria-label="临时隐藏"><svg viewBox="0 0 12 12"><path d="M1 5c3 4 6 4 10-1M3 4h3M7 3h3" fill="none" stroke="#555"/></svg></button>
   <button aria-label="显示隐藏图元"><svg viewBox="0 0 12 12"><circle cx="6" cy="5" r="2" fill="none" stroke="#777"/><path d="M5 9h2" stroke="#777"/></svg></button>
   <button aria-label="临时视图属性"><svg><use href="#q-sw"/></svg></button>
   <button aria-label="分析模型"><svg><use href="#q-sun"/></svg></button>
   <button aria-label="位移集"><svg><use href="#q-cam"/></svg></button>
   <button aria-label="约束"><svg><use href="#q-crop"/></svg></button>
   <svg viewBox="0 0 10 10"><path d="M6 3L4 5l2 2" fill="none" stroke="#333"/></svg>
   <div class="d-flex flex-grow-1 align-items-center justify-content-center"><div class="hthumb"></div></div>
   <svg class="me-2" viewBox="0 0 10 10"><path d="M4 3l2 2-2 2" fill="none" stroke="#333"/></svg>
  </div>
 </section>

 <aside class="browser position-relative flex-shrink-0">
  <div class="panehead d-flex justify-content-between align-items-center pe-1"><span>项目浏览器 - 项目1.rvt</span><button aria-label="关闭项目浏览器"><svg width="7" height="7"><use href="#q-x"/></svg></button></div>
  <ul class="tree">
   <li><div class="row1"><button class="tg" aria-label="折叠"><svg><use href="#q-minus"/></svg></button><svg class="ic" viewBox="0 0 12 12"><path d="M1 3V1h2M9 1h2v2M11 9v2H9M3 11H1V9" fill="none" stroke="#555"/><circle cx="6" cy="6" r="2.500" fill="none" stroke="#555"/></svg><span class="chosen">视图 (全部)</span></div>
    <ul>
     <li><div class="row1"><button class="tg" aria-label="折叠"><svg><use href="#q-minus"/></svg></button><span class="ind">楼层平面</span></div>
      <ul><li class="row1"><i class="dash"></i><i class="leaf"></i>场地</li><li class="row1"><i class="dash"></i><i class="leaf"></i>屋顶平面图</li><li class="row1"><i class="dash"></i><i class="leaf"></i>标高 1</li><li class="row1"><i class="dash"></i><i class="leaf"></i>标高 2</li></ul></li>
     <li class="row1"><button class="tg" aria-label="展开"><svg><use href="#q-plus"/></svg></button><span class="ind">天花板平面</span></li>
     <li class="row1"><button class="tg" aria-label="展开"><svg><use href="#q-plus"/></svg></button><span class="ind">三维视图</span></li>
     <li><div class="row1"><button class="tg" aria-label="折叠"><svg><use href="#q-minus"/></svg></button><span class="ind">立面 (建筑立面)</span></div>
      <ul><li class="row1"><i class="dash"></i><i class="leaf"></i>东</li><li class="row1"><i class="dash"></i><i class="leaf"></i>北</li><li class="row1"><i class="dash"></i><i class="leaf"></i>南</li><li class="row1"><i class="dash"></i><i class="leaf"></i>西</li></ul></li>
     <li class="row1"><button class="tg" aria-label="展开"><svg><use href="#q-plus"/></svg></button><span class="ind">面积平面 (人防分区面积)</span></li>
     <li class="row1"><button class="tg" aria-label="展开"><svg><use href="#q-plus"/></svg></button><span class="ind">面积平面 (净面积)</span></li>
     <li class="row1"><button class="tg" aria-label="展开"><svg><use href="#q-plus"/></svg></button><span class="ind">面积平面 (总建筑面积)</span></li>
     <li class="row1"><button class="tg" aria-label="展开"><svg><use href="#q-plus"/></svg></button><span class="ind">面积平面 (防火分区面积)</span></li>
    </ul></li>
   <li class="row1"><span class="noexp"></span><svg class="ic" viewBox="0 0 12 12"><path d="M1 1h10v10H1z" fill="#eee" stroke="#444"/><path d="M1 3h10M3 5v5M5 5h4M5 8h4" stroke="#444"/></svg>图例</li>
   <li class="row1"><button class="tg" aria-label="展开"><svg><use href="#q-plus"/></svg></button><svg class="ic"><use href="#q-sheet"/></svg>明细表/数量 (全部)</li>
   <li class="row1"><span class="noexp"></span><svg class="ic" viewBox="0 0 12 12"><path d="M1 1h7v8H1zM4 4h6l1 2v5H4z" fill="#eee" stroke="#555"/><path d="M2 6h6" stroke="#555"/></svg>图纸 (全部)</li>
   <li class="row1"><button class="tg" aria-label="展开"><svg><use href="#q-plus"/></svg></button><svg class="ic" viewBox="0 0 12 12"><path d="M1 1h10v10H1z" fill="#f4f4f4" stroke="#666"/><path d="M3 8h4M3 5h3l3-2v6" stroke="#666" fill="none"/></svg>族</li>
   <li class="row1"><button class="tg" aria-label="展开"><svg><use href="#q-plus"/></svg></button><svg class="ic" viewBox="0 0 12 12"><path d="M3 1H1v10h2M9 1h2v10H9M4 3h3v4H4z" fill="none" stroke="#555"/><circle cx="7" cy="7" r="2" fill="#eee" stroke="#555"/></svg>组</li>
   <li class="row1"><span class="noexp"></span><svg class="ic" viewBox="0 0 12 12"><path d="M0 6c0-3 6-3 6 0s6 3 6 0-6-3-6 0-6 3-6 0z" fill="#f0c25a" stroke="#c48f28"/></svg>Revit 链接</li>
  </ul>
  <div class="ime position-absolute d-flex align-items-center">
   <svg width="18" height="18" viewBox="0 0 18 18"><path d="M2 2l13-2 2 15-12 3z" fill="#df6b30"/><path d="M14 5C10 3 5 4 5.500 7c.5 2.500 8 1 8 4 0 3-5 3-9 2" fill="none" stroke="#fff" stroke-width="2.400"/></svg>
   <div class="imebar d-flex align-items-center justify-content-around">
    <svg viewBox="0 0 9 9"><path d="M1 2.500h7v3.500H1zM4.500 0v9" fill="none" stroke="#1b69b3" stroke-width="1.300"/></svg>
    <svg viewBox="0 0 9 9"><circle cx="3" cy="4" r="1" fill="#1b69b3"/><path d="M6 5h2l-1 3H6z" fill="#1b69b3"/></svg>
    <svg viewBox="0 0 9 9"><rect x="3" width="3" height="5" rx="1.500" fill="#1b69b3"/><path d="M1.500 4c0 4 6 4 6 0M4.500 7v2" fill="none" stroke="#1b69b3"/></svg>
    <svg viewBox="0 0 9 9"><path d="M.5 1h8v7h-8zM3 1v7M6 1v7M0 3.500h9M0 6h9" fill="#e8f1fa" stroke="#1b69b3" stroke-width=".8"/></svg>
    <svg viewBox="0 0 9 9"><path d="M0 2l3-2h3l3 2-1 2.500-1-.5v5H2V4l-1 .5z" fill="#1465c0"/></svg>
    <svg viewBox="0 0 9 9"><path d="M0 0h4v4H0zM5 0h4v4H5zM0 5h4v4H0zM5 5h4v4H5z" fill="#1b69b3"/></svg>
   </div>
  </div>
 </aside>
</main>

<footer class="statusbar d-flex align-items-center">
 <span class="hint overflow-hidden flex-shrink-0">单击可进行选择; 按 Tab 键并单击可选择其他项目; 按 Ctrl 键并单击可将新项目添加到选择集; 按 Shift 键并单击可取消选择。</span>
 <svg viewBox="0 0 12 12"><path d="M1 5h4v6H1zM6 1h4v6H6z" fill="#a6dbe6" stroke="#35707f"/></svg>
 <select class="stsel chev ms-1" aria-label="活动工作集"><option></option></select>
 <span class="stic"><svg viewBox="0 0 12 12"><path d="M3 10L9 2M2 11h5" stroke="#888"/></svg></span><span>:0</span>
 <span class="stic ms-2"><svg viewBox="0 0 12 12"><path d="M1 1h10v10H1z" fill="#ddd" stroke="#555"/><path d="M1 3h10M5 5v6" stroke="#444" stroke-width="1.500"/></svg></span>
 <span class="stic"><svg viewBox="0 0 12 12"><path d="M2 2h9v9H2z" fill="#999"/></svg></span>
 <select class="stsel chev ms-1" aria-label="设计选项"><option>主模型</option></select>
 <div class="ms-auto d-flex me-4 pe-3">
  <button class="stic" aria-label="选择链接"><svg viewBox="0 0 12 12"><path d="M1 2h10v3L8 8H5z" fill="#d8ac3b"/><path d="M6 5v6l2-2h3z" fill="#fff" stroke="#444" stroke-width=".7"/></svg></button>
  <button class="stic" aria-label="选择基线图元"><svg viewBox="0 0 12 12"><path d="M1 6l4-4h5v7l-3 2-6-2z" fill="#a9b9cf" stroke="#667"/><path d="M6 1l5 5" stroke="#d33" stroke-width="2"/></svg></button>
  <button class="stic" aria-label="选择锁定图元"><svg viewBox="0 0 12 12"><path d="M3 1h3v5l4 2-4 3-3-3z" fill="#e79a68" stroke="#b5562c"/></svg></button>
  <button class="stic" aria-label="按面选择"><svg viewBox="0 0 12 12"><path d="M2 3l5-2v8l-5 2z" fill="#8fc8ec" stroke="#2f78ab"/><path d="M7 5l4 5H8z" fill="#fff" stroke="#444"/></svg></button>
  <button class="stic" aria-label="拖曳图元"><svg viewBox="0 0 12 12"><path d="M4 0v8M0 4h8" stroke="#222" stroke-width="1.400"/><path d="M6 5v6l2-2h3z" fill="#fff" stroke="#333"/></svg></button>
  <span class="stic"><svg viewBox="0 0 12 12"><circle cx="6" cy="6" r="4" fill="none" stroke="#aaa" stroke-width="2"/></svg></span>
  <button class="d-flex align-items-center ms-1" aria-label="过滤器"><svg viewBox="0 0 12 12"><path d="M1 1h10L7 6v4L5 9V6z" fill="#ddd" stroke="#444"/></svg>:0</button>
 </div>
</footer>
</body>
</html>
